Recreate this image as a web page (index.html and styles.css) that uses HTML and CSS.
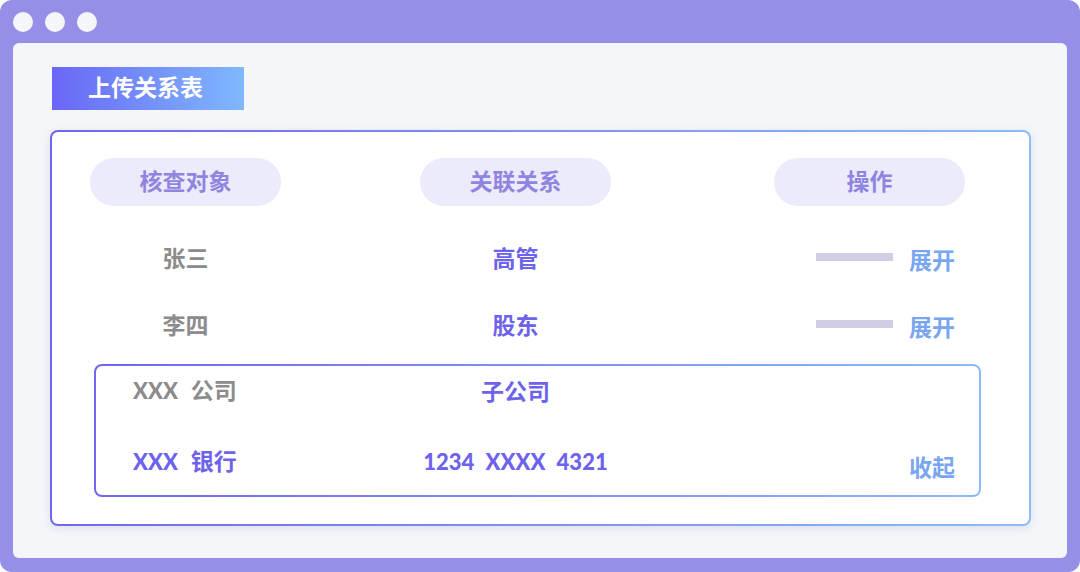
FILE: index.html
```html
<!DOCTYPE html>
<html lang="zh-CN">
<head>
    <meta charset="UTF-8">
    <meta name="viewport" content="width=device-width, initial-scale=1.0">
    <title>上传关系表</title>
    <link rel="stylesheet" href="styles.css">
</head>
<body>
    <div class="frame">
        <div class="frame-bar">
            <span class="dot"></span>
            <span class="dot"></span>
            <span class="dot"></span>
        </div>
        <div class="window">
            <div class="title">上传关系表</div>
            <div class="card">
                <div class="row head">
                    <div class="pill">核查对象</div>
                    <div class="pill">关联关系</div>
                    <div class="pill">操作</div>
                </div>
                <div class="row">
                    <div class="cell name">张三</div>
                    <div class="cell relation">高管</div>
                    <div class="cell action"><span class="bar"></span><span class="link">展开</span></div>
                </div>
                <div class="row">
                    <div class="cell name">李四</div>
                    <div class="cell relation">股东</div>
                    <div class="cell action"><span class="bar"></span><span class="link">展开</span></div>
                </div>
                <div class="detail">
                    <div class="detail-row">
                        <div class="cell name"><span class="latin gap">XXX</span>公司</div>
                        <div class="cell relation">子公司</div>
                        <div class="cell action"></div>
                    </div>
                    <div class="detail-row">
                        <div class="cell name purple"><span class="latin gap">XXX</span>银行</div>
                        <div class="cell relation"><span class="latin">1234 XXXX 4321</span></div>
                        <div class="cell action"><span class="link fold">收起</span></div>
                    </div>
                </div>
            </div>
        </div>
    </div>
</body>
</html>
```

FILE: styles.css
```css
body {
    margin: 0;
    background-color: #fff;
    font-family: "Noto Sans CJK SC", "Noto Sans", sans-serif;
}

.frame {
    width: 1080px;
    height: 572px;
    box-sizing: border-box;
    background-color: #968fe8;
    border-radius: 12px;
    padding: 0 13px 14px 13px;
    display: flex;
    flex-direction: column;
}

.frame-bar {
    height: 43px;
    display: flex;
    align-items: center;
    gap: 12px;
    padding-top: 1px;
    box-sizing: border-box;
}

.dot {
    width: 20px;
    height: 20px;
    border-radius: 50%;
    background-color: #f4f6f9;
}

.window {
    flex: 1;
    background-color: #f4f6f9;
    border-radius: 6px;
    padding: 24px 36px 32px 37px;
}

.title {
    width: 192px;
    height: 43px;
    margin-left: 2px;
    box-sizing: border-box;
    padding: 0 0 4px 36px;
    background: linear-gradient(90deg, #6967f6, #7fb8fe);
    color: #fff;
    font-size: 23px;
    font-weight: 700;
    line-height: 39px;
}

.card {
    margin-top: 20px;
    border: 2px solid transparent;
    border-radius: 8px;
    background: linear-gradient(#fff, #fff) padding-box,
                linear-gradient(90deg, #7166ef, #8dbcf6) border-box;
    box-shadow: 0 2px 8px rgba(60, 60, 120, 0.12);
    padding: 26px 0 27px 38px;
}

.row {
    display: grid;
    grid-template-columns: 330px 354px 191px;
    height: 67px;
    align-items: center;
}

.row.head {
    height: 48px;
    margin-bottom: 20px;
}

.pill {
    width: 191px;
    height: 48px;
    box-sizing: border-box;
    padding-bottom: 4px;
    border-radius: 24px;
    background-color: #ecebfb;
    color: #8f84e0;
    font-size: 23px;
    font-weight: 700;
    line-height: 44px;
    text-align: center;
}

.cell {
    font-size: 23px;
    font-weight: 700;
    line-height: 30px;
    padding-bottom: 6px;
    white-space: nowrap;
}

.name {
    width: 191px;
    text-align: center;
    color: #8c8c8c;
}

.relation {
    width: 191px;
    text-align: center;
    color: #6d62ec;
}

.action {
    display: flex;
    justify-content: flex-end;
    align-items: center;
    padding-right: 10px;
}

.bar {
    width: 77px;
    height: 8px;
    margin-right: 16px;
    background-color: #d0cde7;
}

.link {
    color: #78a6f0;
    line-height: 30px;
    padding-top: 4px;
}

.detail {
    margin: 4px 0 0 4px;
    width: 887px;
    box-sizing: border-box;
    border: 2px solid transparent;
    border-radius: 8px;
    background: linear-gradient(#fff, #fff) padding-box,
                linear-gradient(90deg, #7166ef, #8cbaf6) border-box;
    padding: 7px 0 15px 0;
    display: flex;
    flex-direction: column;
    gap: 27px;
}

.detail-row {
    display: grid;
    grid-template-columns: 324px 354px 191px;
    height: 40px;
    align-items: center;
}

.detail-row .name {
    width: auto;
    text-align: left;
    padding-left: 37px;
}

.name.purple {
    color: #6d62ec;
}

.latin {
    font-family: "Lato", "Noto Sans CJK SC", sans-serif;
    font-weight: 900;
    font-size: 22px;
    word-spacing: 6px;
}

.latin.gap {
    margin-right: 13px;
}

.fold {
    padding-top: 11px;
}
```
